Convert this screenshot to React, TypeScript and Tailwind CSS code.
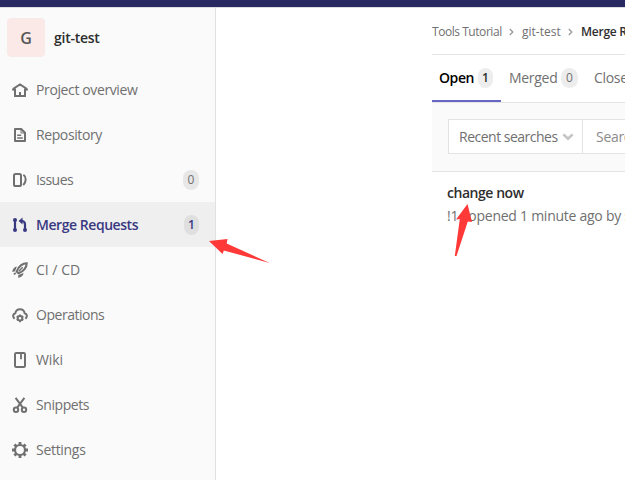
import type { ReactNode } from "react";

const stroke = { fill: "none", stroke: "currentColor", strokeWidth: 2 } as const;

const icons: Record<string, ReactNode> = {
  home: (
    <g {...stroke}>
      <path d="M.5 8.3 1.8 6.500 8 2.500l6.200 4 1.300 1.800" />
      <path d="M3 6.500V14h10V6.500" />
      <path d="M8 14v-4" />
    </g>
  ),
  doc: (
    <g {...stroke}>
      <path d="M3 2h6.200L13 5.800V14H3z" strokeLinejoin="round" />
      <path d="M9 2v4h4" strokeWidth="1" />
      <path d="M5.200 8.200h4M5.200 11h5.600" strokeWidth="1.600" />
    </g>
  ),
  issues: (
    <g {...stroke}>
      <rect x="2" y="2" width="7" height="12" rx="1.600" />
      <path d="M11.400 2.800c3.200 2.200 3 6.800-.2 10.400" />
    </g>
  ),
  merge: (
    <g {...stroke}>
      <path d="M3 3v10M13 13V7.500C13 5 11.800 4 9.500 4" strokeWidth="2.200" />
      <path d="M10.500.6 6.600 4l3.900 3.400z" fill="currentColor" stroke="none" />
      <g fill="currentColor" stroke="none">
        <circle cx="3" cy="3" r="2" />
        <circle cx="3" cy="13" r="2" />
        <circle cx="13" cy="13" r="2" />
      </g>
    </g>
  ),
  rocket: (
    <g {...stroke}>
      <path d="M14.700 1.300C10.800 1.300 6.500 4.300 4.700 9.500l1.800 1.800c5.200-1.800 8.200-6.100 8.200-10z" strokeWidth="2.100" />
      <path d="M10.700 5.300 6.800 9.200" strokeWidth="1.400" />
      <path d="M4.900 4.600C2.300 5 .7 6.900.2 9.900L3 9.200zM11.600 11.100c-.4 2.800-2.500 4.400-5.400 4.800L6.400 13z" fill="currentColor" stroke="none" />
      <path d="m3.800 11-2 1.400" strokeWidth="1.600" />
    </g>
  ),
  cloud: (
    <g {...stroke}>
      <path d="M2.600 11.800C.2 9.800 1 6.800 3.300 6.200 3.800 3.600 5.700 2.200 8 2.200s4.200 1.400 4.700 4c2.300.6 3.100 3.600.7 5.600" />
      <circle cx="8" cy="11.200" r="2.300" />
      <path d="M8 7.400v1.600M8 13.400v1.800M4.700 9.300l1.400.8M9.900 12.300l1.400.8M4.700 13.100l1.400-.8M9.900 10.100l1.400-.8" strokeWidth="1.800" />
    </g>
  ),
  book: (
    <g {...stroke}>
      <rect x="3" y="1" width="10" height="14" rx="1.200" />
      <path d="M9 2v5.200" strokeWidth="1.800" />
    </g>
  ),
  scissors: (
    <g {...stroke}>
      <path d="M3.600.8 10.800 10.600M12.400.8 5.200 10.600" />
      <circle cx="4" cy="12.800" r="2.200" />
      <circle cx="12" cy="12.800" r="2.200" />
    </g>
  ),
  gear: (
    <g {...stroke}>
      <circle cx="8" cy="8" r="5" strokeWidth="2.200" />
      <path
        d="M8 0v3M8 13v3M0 8h3M13 8h3M2.400 2.400l2.100 2.100M11.500 11.500l2.100 2.100M2.400 13.600l2.100-2.100M11.500 4.500l2.100-2.100"
        strokeWidth="2.800"
      />
    </g>
  ),
};

type Item = { icon: string; label: string; track: string; count?: number; active?: boolean };

const items: Item[] = [
  { icon: "home", label: "Project overview", track: "tracking-[-0.38px]" },
  { icon: "doc", label: "Repository", track: "tracking-[-0.4px]" },
  { icon: "issues", label: "Issues", track: "tracking-[-0.55px]", count: 0 },
  { icon: "merge", label: "Merge Requests", track: "tracking-[-0.45px]", count: 1, active: true },
  { icon: "rocket", label: "CI / CD", track: "tracking-[0px]" },
  { icon: "cloud", label: "Operations", track: "tracking-[-0.47px]" },
  { icon: "book", label: "Wiki", track: "tracking-[-0.1px]" },
  { icon: "scissors", label: "Snippets", track: "tracking-[-0.42px]" },
  { icon: "gear", label: "Settings", track: "tracking-[-0.3px]" },
];

function Chevron() {
  return (
    <svg className="h-2 w-[5px] shrink-0 text-[#999]" viewBox="0 0 5 8" fill="none" stroke="currentColor" strokeWidth="1.3">
      <path d="m.8 1 3 3-3 3" />
    </svg>
  );
}

function Sidebar() {
  return (
    <aside className="h-[472px] w-[216px] shrink-0 border-r border-[#e1e1e1] bg-[#fafafa]">
      <div className="flex h-[59px] items-center pl-[7px]">
        <div className="flex h-[39px] w-[38px] items-center justify-center rounded-[4px] border border-[#f7eae8] bg-[#fbe9e7] text-[16px] font-semibold text-[#555]">
          G
        </div>
        <span className="ml-[9px] text-[14px] font-semibold tracking-[-0.25px] text-[#2e2e2e]">git-test</span>
      </div>
      <nav>
        {items.map((item) => (
          <div
            key={item.label}
            className={`flex h-[45px] items-center pr-4 pl-3 ${item.active ? "bg-[#efefef] font-semibold text-[#393982]" : "text-[#707070]"}`}
          >
            <svg className="size-4 shrink-0" viewBox="0 0 16 16">{icons[item.icon]}</svg>
            <span className={`ml-2 text-[14px] whitespace-nowrap ${item.track}`}>{item.label}</span>
            {item.count !== undefined && (
              <span
                className={`ml-auto flex h-5 items-center justify-center rounded-full text-[12px] ${item.active ? "w-[15px] bg-[#dfdfdf]" : "w-4 bg-[#e7e7e7]"}`}
              >
                {item.count}
              </span>
            )}
          </div>
        ))}
      </nav>
    </aside>
  );
}

function Content() {
  return (
    <main className="ml-[216px] w-[193px] shrink-0 overflow-hidden whitespace-nowrap">
      <div className="flex h-[47px] items-center border-b border-[#e5e5e5] pt-[2px] text-[12px] text-[#707070]">
        <span className="w-[77px] shrink-0 tracking-[-0.45px]">Tools Tutorial</span>
        <Chevron />
        <span className="ml-2 w-[46px] shrink-0 tracking-[0px]">git-test</span>
        <Chevron />
        <span className="ml-[8px] font-semibold tracking-[-0.25px] text-[#2e2e2e]">Merge R</span>
      </div>
      <div className="flex h-[48px] border-b border-[#e5e5e5] text-[14px] text-[#707070]">
        <div className="flex h-[47px] w-[69px] shrink-0 items-center border-b-2 border-[#6666c4] pl-[7px] font-semibold text-black">
          <span className="w-[39px] tracking-[-0.4px]">Open</span>
          <span className="flex h-5 w-[15px] items-center justify-center rounded-full bg-[#ededed] text-[12px] text-[#2e2e2e]">1</span>
        </div>
        <div className="flex h-[45px] shrink-0 items-center pl-2">
          <span className="w-[52px] tracking-[-0.3px]">Merged</span>
          <span className="flex h-5 w-[17px] items-center justify-center rounded-full bg-[#ededed] text-[12px]">0</span>
        </div>
        <div className="flex h-[45px] shrink-0 items-center pl-4 tracking-[-0.3px]">Close</div>
      </div>
      <div className="h-[69px] border-b border-[#e5e5e5] bg-[#fafafa] pt-4 pl-4">
        <div className="flex h-[35px] w-[300px] border border-[#e3e3e3] bg-white text-[14px] text-[#707070]">
          <div className="flex w-[134px] shrink-0 items-center border-r border-[#e3e3e3] pl-[10px]">
            <span className="w-[103px] tracking-[-0.5px]">Recent searches</span>
            <svg className="h-2 w-[12px] shrink-0" viewBox="0 0 11 8" fill="none" stroke="#c4c4c4" strokeWidth="2.6">
              <path d="m.9 1.400 4.600 4.400 4.600-4.400" />
            </svg>
          </div>
          <span className="self-center pl-[13px] tracking-[-0.3px] text-[#8c8c8c]">Searc</span>
        </div>
      </div>
      <div className="pt-[10px] pl-[15px]">
        <div className="h-[22px] text-[14px] leading-[22px] font-semibold tracking-[-0.45px] text-[#2e2e2e]">change now</div>
        <div className="h-6 text-[14px] leading-6 tracking-[-0.26px] text-[#707070]">!1 · opened 1 minute ago by s</div>
      </div>
    </main>
  );
}

export default function App() {
  return (
    <div className="relative h-[480px] w-[625px] overflow-hidden bg-white font-['Open_Sans','Noto_Sans',sans-serif]">
      <header className="h-2 border-b border-[#dcdce4] bg-[#292961]" />
      <div className="flex">
        <Sidebar />
        <Content />
      </div>
      <svg className="pointer-events-none absolute inset-0" width="625" height="480" viewBox="0 0 625 480" fill="#ff3838">
        <path d="m209 241 18.500-2-.8 4.500 43 19.500-45.800-12.500L222.500 254z" />
        <path d="M467.500 204 472 222l-4.200-.5L456.500 256h-1.700l5-37-3.800.5z" />
      </svg>
    </div>
  );
}
